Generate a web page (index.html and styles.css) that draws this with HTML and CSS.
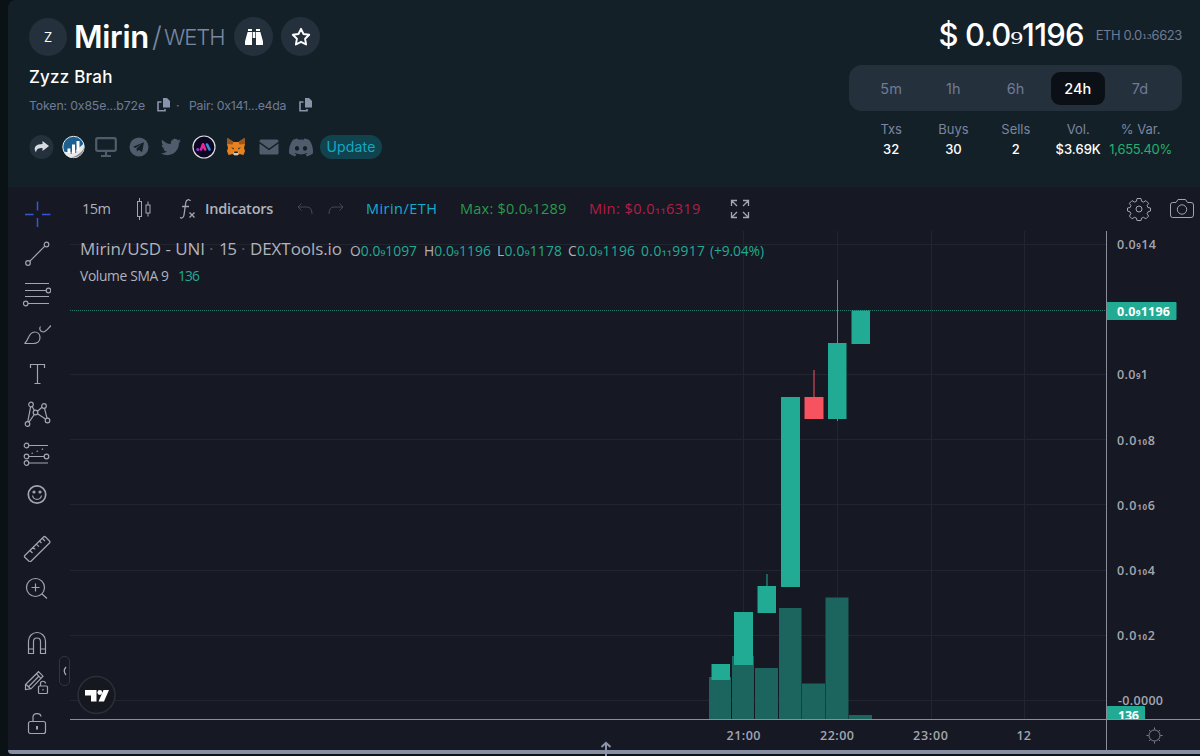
FILE: index.html
```html
<!DOCTYPE html>
<html lang="en">
<head>
    <meta charset="UTF-8">
    <meta name="viewport" content="width=device-width, initial-scale=1.0">
    <title>Mirin / WETH</title>
    <link rel="stylesheet" href="styles.css">
</head>
<body>
<div class="page">

    <header class="pair-header">
        <div class="pair-info">
            <div class="title-row">
                <span class="token-logo">Z</span>
                <h1 class="symbol">Mirin</h1>
                <span class="slash">/</span>
                <span class="quote">WETH</span>
                <button class="round-btn">
                    <svg width="20" height="18" viewBox="0 0 20 18" fill="#fff"><path d="M4 1h4v2H4zM12 1h4v2h-4zM3.6 4H8v13H1v-3.5zM12 4h4.4L19 13.5V17h-7zM8.7 4h2.6v6H8.7z"/></svg>
                </button>
                <button class="round-btn">
                    <svg width="20" height="20" viewBox="0 0 20 20" fill="none" stroke="#fff" stroke-width="1.9" stroke-linejoin="round"><path d="M10 1.8l2.5 5.2 5.7.8-4.1 4 1 5.7-5.1-2.7-5.1 2.7 1-5.7-4.1-4 5.7-.8z"/></svg>
                </button>
            </div>
            <h2 class="token-name">Zyzz Brah</h2>
            <div class="address-row">
                <span class="addr addr-token">Token: 0x85e...b72e</span>
                <svg class="copy" width="14" height="14" viewBox="0 0 14 14"><path d="M6 0h4l3 3v6.5H6z" fill="#8a93aa"/><path d="M4.5 4H1v8.8h7V11" fill="none" stroke="#8a93aa" stroke-width="1.6"/></svg>
                <span class="dot">·</span>
                <span class="addr addr-pair">Pair: 0x141...e4da</span>
                <svg class="copy" width="14" height="14" viewBox="0 0 14 14"><path d="M6 0h4l3 3v6.5H6z" fill="#8a93aa"/><path d="M4.5 4H1v8.8h7V11" fill="none" stroke="#8a93aa" stroke-width="1.6"/></svg>
            </div>
            <div class="links-row">
                <svg width="25" height="24" viewBox="0 0 25 24"><circle cx="12.5" cy="12" r="12" fill="#24303b"/><path d="M13.5 6l6.5 5-6.5 5v-3c-4 0-6 .8-6.5 4.5C3.5 12 7.5 9 13.5 9z" fill="#d5dae3"/></svg>
                <svg width="23" height="24" viewBox="0 0 23 24"><circle cx="11.5" cy="12" r="10.7" fill="#1c5f91" stroke="#dfe6ec"/><path d="M2 16.5c7 2 14-1.5 20-8.5 1 8-4 15-10.5 15C7 23 3 20.5 2 16.5z" fill="#e9e9e7"/><path d="M9 22.800c5-1.500 10-4.500 13-9.500-.5 5.500-5.500 9.800-13 9.500z" fill="#918c88"/><path d="M5.500 13.500h3V18h-3zM10 9.500h3V18h-3zM14.500 6h3v10h-3z" fill="#fff"/><path d="M9.200 13.500V19M13.700 10v8" stroke="#1c5f91" stroke-width=".9"/></svg>
                <svg width="22" height="22" viewBox="0 0 22 22" fill="none" stroke="#505b6b" stroke-width="2.2"><rect x="1.2" y="2.2" width="19.6" height="12.6" rx="1.5"/><path d="M11 15v4M6 20h10"/></svg>
                <svg width="20" height="20" viewBox="0 0 20 20"><circle cx="10" cy="10" r="9.5" fill="#505b6b"/><path d="M4 9.8l11-4.6-1.900 10-3.300-2.400-1.900 1.800-.4-3.200 5-4.300-6.200 3.800z" fill="#142027"/></svg>
                <svg width="20" height="20" viewBox="0 0 24 24" fill="#505b6b"><path d="M23.950 4.600a10 10 0 0 1-2.800.8 4.960 4.960 0 0 0 2.160-2.720c-.95.550-2 .950-3.130 1.180a4.920 4.920 0 0 0-8.380 4.480C7.700 8.100 4.070 6.130 1.640 3.160a4.920 4.920 0 0 0 1.520 6.570 4.900 4.900 0 0 1-2.230-.6v.06a4.920 4.920 0 0 0 3.950 4.830 5 5 0 0 1-2.210.080 4.940 4.940 0 0 0 4.600 3.420A9.870 9.870 0 0 1 0 19.540a14 14 0 0 0 7.550 2.210c9.050 0 14-7.500 14-13.980 0-.210 0-.420-.020-.630a9.940 9.940 0 0 0 2.420-2.540z"/></svg>
                <svg width="24" height="24" viewBox="0 0 24 24" fill="none" stroke-linecap="round"><circle cx="12" cy="12" r="11" fill="#0b0720" stroke="#dcdde2" stroke-width="1.2"/><circle cx="5.8" cy="14.5" r="1.5" fill="#b02be0"/><path d="M9 14.500l2-5" stroke="#d822c4" stroke-width="2.6"/><path d="M11 9.500l2.200 5" stroke="#ee2a86" stroke-width="2.6"/><path d="M15 9.500l2.500 5" stroke="#2c8fe8" stroke-width="2.6"/></svg>
                <svg width="20" height="20" viewBox="0 0 20 20"><path d="M1.500 1l6 4h5l6-4 .5 6-1 4 1 3-1.500 4-4-1-2 1.500h-3L6.500 17l-4 1L1 14l1-3-1-4z" fill="#e8821e"/><path d="M1.500 1l6 4-1 2.500L1 7zM18.500 1l-6 4 1 2.500L19 7z" fill="#9a5522"/><path d="M5 10.500l3 .5-.5 1.500zM15 10.500l-3 .5.5 1.500z" fill="#29303c"/><path d="M7.500 15h5l-.5 3H8z" fill="#d9c8b8"/><path d="M8.500 14.500h3l.5 1.500H8z" fill="#222"/></svg>
                <svg width="20" height="20" viewBox="0 0 20 20" fill="#505b6b"><path d="M2 2.500h16q1.500 0 1.500 1.500v.8L10 11.500.5 4.800V4Q.5 2.500 2 2.500z"/><path d="M.5 6.500L10 13.300l9.500-6.800V16q0 1.500-1.500 1.500H2Q.5 17.500.5 16z"/></svg>
                <svg width="24" height="20" viewBox="0 0 24 20" fill="#505b6b"><path fill-rule="evenodd" d="M20.300 3A19.800 19.800 0 0 0 15.400 1.500l-.7 1.300a18 18 0 0 0-5.400 0L8.600 1.500A19.800 19.800 0 0 0 3.700 3C.6 7.600-.3 12 .1 16.400a20 20 0 0 0 6 3l1.300-2.100-1.900-.9.5-.4a14.200 14.200 0 0 0 12 0l.5.4-1.900.9 1.300 2.100a20 20 0 0 0 6-3C24.400 11.300 23.100 6.900 20.300 3zM8 13.700c-1.200 0-2.100-1.100-2.100-2.400S6.800 8.900 8 8.900s2.200 1.100 2.100 2.400c0 1.300-.9 2.400-2.100 2.400zm8 0c-1.200 0-2.100-1.100-2.100-2.400s.9-2.400 2.100-2.400 2.200 1.100 2.100 2.400c0 1.300-.9 2.400-2.100 2.400z"/></svg>
                <button class="update-btn">Update</button>
            </div>
        </div>

        <div class="price-info">
            <div class="price-row">
                <span class="price">$ 0.0<span class="serif-sub">₉</span>1196</span>
                <span class="price-eth">ETH 0.0<span class="serif-sub">₁₃</span>6623</span>
            </div>
            <div class="range-tabs">
                <button class="tab">5m</button>
                <button class="tab">1h</button>
                <button class="tab">6h</button>
                <button class="tab active">24h</button>
                <button class="tab">7d</button>
            </div>
            <div class="stats">
                <div class="stat"><span>Txs</span><b>32</b></div>
                <div class="stat"><span>Buys</span><b>30</b></div>
                <div class="stat"><span>Sells</span><b>2</b></div>
                <div class="stat"><span>Vol.</span><b>$3.69K</b></div>
                <div class="stat"><span>% Var.</span><b class="up">1,655.40%</b></div>
            </div>
        </div>
    </header>

    <main class="chart-panel">
        <aside class="draw-tools">
            <svg class="tool cross" viewBox="0 0 28 28"><path d="M14.5 1.5v9M14.5 18v9M2 14.5h8.5M19 14.5h8.5"/></svg>
            <svg class="tool" viewBox="0 0 28 28"><circle cx="5" cy="23" r="2.3"/><circle cx="23.5" cy="4.5" r="2.3"/><path d="M6.7 21.3L21.8 6.2"/></svg>
            <svg class="tool" viewBox="0 0 28 28"><path d="M2 3.5h24M2 10.5h21M2 16.5h24M5 23.5h21"/><circle cx="25.5" cy="10.5" r="2.3"/><circle cx="2.7" cy="23.5" r="2.3"/></svg>
            <svg class="tool" viewBox="0 0 28 28"><path d="M1.5 23.5c4-2 3.500-11.500 10-11.500 3.500 0 5.500 2.500 5.500 5.500 0 4-3 6-6.500 6zM17.500 6.500c-1.500 2-.5 5.500 3 5.500 2 0 3-1.500 7.500-6.500"/></svg>
            <svg class="tool" viewBox="0 0 28 28"><path d="M7.5 8V4.500h14V8M14.500 4.500v19M11.500 23.500h6"/></svg>
            <svg class="tool" viewBox="0 0 28 28"><circle cx="4.5" cy="24" r="2.3"/><circle cx="8" cy="4.5" r="2.3"/><circle cx="12.5" cy="12.5" r="2.3"/><circle cx="21" cy="6" r="2.3"/><circle cx="24.5" cy="20.5" r="2.3"/><path d="M4.800 21.700L7.600 6.800M9.100 6.500l2.300 4M6 22.200l5.300-7.700M14.500 11.200L19 7.200M14.500 13.800l8 5.300M21.500 8.300l2.500 9.900"/></svg>
            <svg class="tool" viewBox="0 0 28 28"><circle cx="3.5" cy="5.5" r="2.3"/><circle cx="3.5" cy="16.5" r="2.3"/><circle cx="23.5" cy="16.5" r="2.3"/><circle cx="3.5" cy="23" r="2.3"/><path d="M6 5.500h19M6 16.500h15M6 23h19"/><path d="M8.500 13.500l14-5.500" stroke-dasharray="1.500 4"/></svg>
            <svg class="tool" viewBox="0 0 28 28"><circle cx="14" cy="14.5" r="8.7" stroke-width="1.7"/><path d="M9.500 15.500c1 5.200 8 5.200 9 0"/><circle class="solid" cx="11" cy="12" r="1"/><circle class="solid" cx="17" cy="12" r="1"/></svg>
            <svg class="tool gap" viewBox="0 0 28 28"><path d="M1.800 21.500L20.500 3q1-1 2 0l4 4q1 1 0 2L8 27.300q-1 1-2 0l-4.200-4q-.8-.9 0-1.800zM7 16.500l2.500 2.500M10.200 13.300l2 2M13.400 10.200l2.500 2.500M16.500 7l2 2M19.500 4.500L22 7"/></svg>
            <svg class="tool" viewBox="0 0 28 28"><circle cx="12.5" cy="13.5" r="9"/><path d="M12.500 9.500v8M8.500 13.500h8M19 20l5 4.500"/></svg>
            <svg class="tool gap wide" viewBox="0 0 28 28"><path d="M5.500 24.500V12a8.500 8.500 0 0 1 17 0v12.500h-5V12.500a3.500 3.500 0 0 0-7 0v12zM5.500 20h5M17.500 20h5"/></svg>
            <svg class="tool" viewBox="0 0 28 28"><path d="M2.500 20.500V15.500L15.500 2.700l4.500 4.500L8 19.800zM3 15.500l5 4.500M13.500 4.800l4.500 4.500M5.800 17.500L16 7"/><rect x="15.5" y="17" width="9" height="7.5" rx="1"/><path d="M17.500 17v-2.500c0-3 4.800-3 5 0M20 20v1.500"/></svg>
            <svg class="tool" viewBox="0 0 28 28"><rect x="5.5" y="12.5" width="17" height="12" rx="2"/><path d="M10 12.500V8.300c0-4.700 7.500-4.700 8-.8"/><path d="M14 17v3.500" stroke-width="2"/></svg>
            <button class="collapse"><svg width="5" height="10" viewBox="0 0 5 10"><path d="M4 1Q.5 5 4 9" fill="none" stroke="#a9acb6" stroke-width="1.2"/></svg></button>
        </aside>

        <section class="chart">
            <nav class="chart-toolbar">
                <span class="t-interval">15m</span>
                <svg class="tb-icon t-candles" width="18" height="24" viewBox="0 0 18 24"><rect x="2.5" y="4.5" width="4" height="15"/><path d="M4.500 1v3.500M4.500 19.500V23M13 4.500V8M13 16v3.500"/><rect x="11" y="8" width="4" height="8"/></svg>
                <svg class="tb-icon t-fx" width="18" height="22" viewBox="0 0 18 22"><path d="M11.500 3C10 .8 7.300 1.500 6.800 4.500L5 17c-.5 3-2.500 3.500-4 2.500M3 8.500h7M10.500 14.500l5 5M15.500 14.500l-5 5" stroke-width="1.3"/></svg>
                <span class="t-indicators">Indicators</span>
                <svg class="tb-icon dim t-undo" width="16" height="12" viewBox="0 0 16 12"><path d="M4.500.5L1 4l3.500 3.500M1 4h9q5 0 5 7"/></svg>
                <svg class="tb-icon dim t-redo" width="16" height="12" viewBox="0 0 16 12"><path d="M11.500.5L15 4l-3.500 3.500M15 4H6Q1 4 1 11"/></svg>
                <span class="t-pair">Mirin/ETH</span>
                <span class="t-max">Max: $0.0<span class="sub">₉</span>1289</span>
                <span class="t-min">Min: $0.0<span class="sub">₁₁</span>6319</span>
                <svg class="tb-icon t-full" width="20" height="20" viewBox="0 0 20 20"><path d="M1.500 7V1.500H7M1.500 1.500l5.500 5.500M13 1.500h5.500V7M18.500 1.500L13 7M1.500 13v5.500H7M1.500 18.500L7 13M13 18.500h5.500V13M18.500 18.500L13 13" stroke-width="1.3"/></svg>
                <svg class="tb-icon t-gear" width="24" height="24" viewBox="0 0 24 24"><circle cx="12" cy="12" r="3"/><path d="M10 1.500h4l.6 2.800 1.900.8 2.400-1.500 2.700 2.700-1.500 2.400.8 1.800 2.600.5v3l-2.600.9-.8 1.800 1.500 2.400-2.700 2.700-2.400-1.500-1.900.8-.6 2.400h-4l-.6-2.400-1.900-.8-2.400 1.500-2.700-2.700 1.500-2.400-.8-1.800-2.600-.9v-3l2.600-.5.8-1.800-1.500-2.400 2.700-2.700 2.400 1.500 1.900-.8z" stroke-linejoin="round"/></svg>
                <svg class="tb-icon t-camera" width="26" height="22" viewBox="0 0 26 22"><path d="M3.500 4.500H7L9 1.500h7.500l2 3H22q2.500 0 2.500 2.500v10q0 2.500-2.500 2.500H3.500Q1.500 19.500 1.500 17V7q0-2.500 2-2.500z"/><circle cx="13" cy="11.5" r="4.7"/></svg>
            </nav>

            <svg class="plot" width="1130" height="519" viewBox="70 231 1130 519">
                <g class="grid">
                    <path d="M70 244.500h1036M70 374.500h1036M70 439.500h1036M70 504.500h1036M70 570.500h1036M70 635.500h1036M70 700.500h1036"/>
                    <path d="M743.500 231v488M837.500 231v488M931.500 231v488M1024.500 231v488"/>
                </g>
                <path class="last-price" d="M70 310.500h1036"/>

                <!-- volume -->
                <g class="volume">
                    <rect x="709" y="677" width="22" height="42"/>
                    <rect x="732" y="656" width="22" height="63"/>
                    <rect x="755" y="668" width="23" height="51"/>
                    <rect x="779" y="608" width="22.5" height="111"/>
                    <rect x="802" y="683.5" width="23" height="35.5"/>
                    <rect x="825.5" y="597.5" width="23" height="121.5"/>
                    <rect x="849" y="715" width="23" height="4"/>
                </g>

                <!-- candles -->
                <g class="candles">
                    <rect x="711.5" y="664" width="18.5" height="16"/>
                    <rect x="734" y="612" width="19" height="53"/>
                    <rect x="757.5" y="586" width="18.5" height="27"/>
                    <rect x="766.5" y="574" width="1" height="12"/>
                    <rect x="781" y="397" width="19" height="190"/>
                    <rect class="down" x="804.5" y="397" width="19" height="22"/>
                    <rect class="down" x="813.5" y="370" width="1" height="27"/>
                    <rect x="828" y="343" width="18.5" height="76"/>
                    <rect x="837" y="280" width="1" height="141"/>
                    <rect x="851.5" y="310.5" width="18.5" height="33.5"/>
                </g>

                <g class="legend">
                    <text class="big" x="80" y="255" textLength="125">Mirin/USD - UNI</text>
                    <text class="big faint" x="209" y="255">·</text>
                    <text class="big" x="219" y="255" textLength="18">15</text>
                    <text class="big faint" x="241" y="255">·</text>
                    <text class="big" x="250" y="255" textLength="92">DEXTools.io</text>
                    <text x="350" y="256" textLength="67">O<tspan class="green">0.0<tspan class="sub">₉</tspan>1097</tspan></text>
                    <text x="424" y="256" textLength="67">H<tspan class="green">0.0<tspan class="sub">₉</tspan>1196</tspan></text>
                    <text x="497" y="256" textLength="65">L<tspan class="green">0.0<tspan class="sub">₉</tspan>1178</tspan></text>
                    <text x="568" y="256" textLength="67">C<tspan class="green">0.0<tspan class="sub">₉</tspan>1196</tspan></text>
                    <text class="green" x="641" y="256" textLength="64">0.0<tspan class="sub">₁₁</tspan>9917</text>
                    <text class="green" x="710" y="256" textLength="54">(+9.04%)</text>
                    <text x="80" y="281" textLength="89">Volume SMA 9</text>
                    <text class="green" x="178" y="281" textLength="22">136</text>
                </g>

                <g class="axis-labels">
                    <text x="1117" y="249" textLength="39">0.0<tspan class="sub">₉</tspan>14</text>
                    <text x="1117" y="379" textLength="31">0.0<tspan class="sub">₉</tspan>1</text>
                    <text x="1117" y="444.5" textLength="38">0.0<tspan class="sub">₁₀</tspan>8</text>
                    <text x="1117" y="509.5" textLength="38">0.0<tspan class="sub">₁₀</tspan>6</text>
                    <text x="1117" y="575" textLength="38">0.0<tspan class="sub">₁₀</tspan>4</text>
                    <text x="1117" y="640" textLength="38">0.0<tspan class="sub">₁₀</tspan>2</text>
                    <text x="1118" y="705" textLength="45">-0.0000</text>
                    <text x="726.5" y="740" textLength="34">21:00</text>
                    <text x="820" y="740" textLength="34">22:00</text>
                    <text x="913" y="740" textLength="35">23:00</text>
                    <text x="1016.5" y="740">12</text>
                </g>

                <rect class="tag" x="1106" y="302" width="70.5" height="18" rx="1"/>
                <text class="tag-text" x="1117" y="316" textLength="53">0.0<tspan class="sub">₉</tspan>1196</text>
                <clipPath id="above-axis"><rect x="1106" y="700" width="94" height="19"/></clipPath>
                <g clip-path="url(#above-axis)">
                    <rect class="tag" x="1106" y="706" width="39" height="18" rx="1"/>
                    <text class="tag-text" x="1118" y="720" textLength="21">136</text>
                </g>

                <path class="axis" d="M1106.500 231v519M70 719.500h1130"/>

                <circle class="tv-bg" cx="96.5" cy="695" r="18.5"/>
                <path class="tv" d="M85 690h11.500v11.500h-5.500v-6H85zM103.500 690h5.500l-5 11.500h-5.500z"/>
                <circle class="tv" cx="99.8" cy="692.5" r="2.4"/>

                <g class="sun">
                    <circle cx="1154.5" cy="735.5" r="5.5"/>
                    <path d="M1154.500 727.500v2M1154.500 741.500v2M1146.500 735.500h2M1160.500 735.500h2M1149 730l1.500 1.500M1158.500 739.500l1.500 1.500M1149 741l1.500-1.500M1158.500 731.500l1.500-1.500"/>
                </g>
            </svg>
        </section>
    </main>

    <div class="resize-bar">
        <svg class="resize-arrow" width="12" height="15" viewBox="0 0 12 15"><path d="M6 15V2M1.500 6L6 1.800 10.500 6" fill="none" stroke="#8b94a8" stroke-width="2"/></svg>
    </div>
</div>
</body>
</html>
```
FILE: styles.css
```css
* {
    box-sizing: border-box;
}

body {
    margin: 0;
    background: #0a1216;
    font-family: "Inter", "Open Sans", sans-serif;
    color: #fff;
    overflow: hidden;
}

button {
    border: none;
    padding: 0;
    font-family: inherit;
    color: inherit;
    cursor: pointer;
}

svg {
    display: block;
    flex: none;
}

.page {
    height: 756px;
    padding-left: 8px;
    display: flex;
    flex-direction: column;
}

/* Header */
.pair-header {
    height: 187px;
    padding: 0 18px 0 21px;
    background: #142027;
    border-top-left-radius: 8px;
    display: flex;
    justify-content: space-between;
}

.title-row {
    height: 39px;
    margin-top: 17px;
    display: flex;
    align-items: center;
}

.token-logo {
    width: 38px;
    height: 38px;
    border-radius: 50%;
    background: #24303b;
    display: flex;
    align-items: center;
    justify-content: center;
    font-size: 13px;
}

.symbol {
    margin: 0 0 0 7px;
    width: 78px;
    font-size: 31px;
    font-weight: 600;
    letter-spacing: -0.3px;
}

.slash {
    width: 12px;
    font-size: 28px;
    font-weight: 300;
    color: #7a87a3;
}

.quote {
    width: 70px;
    font-size: 22px;
    font-weight: 300;
    letter-spacing: -1px;
    color: #7a87a3;
}

.round-btn {
    width: 39px;
    height: 39px;
    margin-right: 8px;
    border-radius: 50%;
    background: #24303b;
    display: flex;
    align-items: center;
    justify-content: center;
}

.token-name {
    margin: 9px 0 0;
    font-size: 17px;
    line-height: 24px;
    font-weight: 500;
    letter-spacing: 0.2px;
}

.address-row {
    height: 20px;
    margin-top: 6px;
    display: flex;
    align-items: center;
    font-size: 12.3px;
    letter-spacing: -0.15px;
    color: #6f7b96;
}

.addr {
    white-space: nowrap;
}

.addr-token {
    width: 128px;
}

.addr-pair {
    width: 110px;
    letter-spacing: -0.25px;
}

.dot {
    width: 18px;
    padding-left: 5px;
}

.links-row {
    height: 24px;
    margin: 20px 0 0 -4px;
    display: grid;
    grid-template-columns: repeat(9, 32.5px) 62px;
    align-items: center;
    justify-items: center;
}

.update-btn {
    width: 62px;
    height: 24px;
    margin-left: 5px;
    padding-bottom: 2px;
    border-radius: 12px;
    background: #11434f;
    color: #12a9c5;
    font-size: 14px;
    letter-spacing: 0.2px;
}

.price-info {
    width: 333px;
}

.price-row {
    height: 48px;
    margin-top: 11px;
    display: flex;
    align-items: center;
    justify-content: flex-end;
    gap: 12px;
    white-space: nowrap;
}

.price {
    font-size: 31px;
    line-height: 40px;
    font-weight: 500;
    letter-spacing: -0.8px;
}

.price-eth {
    font-size: 13px;
    letter-spacing: -0.4px;
    color: #6f7b96;
}

.serif-sub {
    font-family: "DejaVu Serif", serif;
    line-height: 1;
    vertical-align: 0.08em;
}

.range-tabs {
    height: 46px;
    margin-top: 6px;
    padding: 0 11px;
    border-radius: 13px;
    background: #24303b;
    display: grid;
    grid-template-columns: repeat(5, 1fr);
    align-items: center;
    justify-items: center;
}

.tab {
    width: 54px;
    height: 33px;
    border-radius: 9px;
    background: transparent;
    color: #6f7b96;
    font-size: 14.5px;
}

.tab.active {
    background: #0b1016;
    color: #fff;
    font-weight: 500;
}

.stats {
    margin-top: 8px;
    padding: 0 10px 0 11px;
    display: grid;
    grid-template-columns: repeat(5, 1fr);
}

.stat {
    display: flex;
    flex-direction: column;
    align-items: center;
    font-size: 13px;
    line-height: 20px;
    color: #7a86a0;
}

.stat b {
    font-weight: 500;
    color: #fff;
}

.stat .up {
    font-weight: 400;
    letter-spacing: -0.3px;
    color: #23b26d;
}

/* Chart */
.chart-panel {
    height: 563px;
    background: #161823;
    display: flex;
    font-family: "Open Sans", "Noto Sans", sans-serif;
}

.draw-tools {
    position: relative;
    width: 62px;
    padding: 7px 5px 0 0;
    display: flex;
    flex-direction: column;
    align-items: center;
}

.tool {
    width: 28px;
    height: 28px;
    margin: 6px 0;
    fill: none;
    stroke: #a3a6b0;
    stroke-width: 1.2;
}

.tool.gap {
    margin-top: 20px;
}

.tool.wide {
    margin-top: 21px;
}

.tool.cross {
    stroke: #3557d6;
    stroke-width: 1.5;
}

.tool .solid {
    fill: #a3a6b0;
}

.collapse {
    position: absolute;
    left: 51px;
    top: 469px;
    width: 11px;
    height: 30px;
    border: 1px solid #2c3840;
    border-radius: 5px;
    background: #161823;
    display: flex;
    align-items: center;
    justify-content: center;
}

.chart {
    width: 1130px;
}

.chart-toolbar {
    height: 44px;
    padding-left: 12px;
    display: flex;
    align-items: center;
    font-size: 14.5px;
    line-height: 20px;
    font-weight: 500;
    color: #b0b3bc;
    white-space: nowrap;
}

.chart-toolbar > span {
    padding-bottom: 1px;
}

.sub {
    line-height: 1;
    vertical-align: 2px;
    baseline-shift: 2px;
}

.tb-icon {
    fill: none;
    stroke: #a3a6b0;
}

.tb-icon.dim {
    stroke: #454954;
}

.t-interval {
    width: 53px;
    letter-spacing: -0.6px;
}

.t-candles {
    margin-right: 26px;
}

.t-fx {
    margin-right: 8px;
}

.t-indicators {
    width: 92px;
    font-weight: 600;
    letter-spacing: -0.2px;
}

.t-undo {
    margin-right: 15px;
}

.t-redo {
    margin-right: 22px;
}

.t-pair {
    width: 94px;
    letter-spacing: 0.45px;
    color: #12aed0;
}

.t-max {
    width: 129px;
    letter-spacing: 0.25px;
    color: #2a9a4c;
}

.t-min {
    width: 141px;
    letter-spacing: 0.45px;
    color: #b51d48;
}

.t-full {
    margin-right: auto;
}

.t-gear {
    margin-right: 18px;
}

.t-camera {
    margin-right: 5px;
}

.grid path {
    fill: none;
    stroke: #22252f;
}

.last-price {
    stroke: #2c7a6f;
    stroke-dasharray: 1 1;
}

.volume {
    fill: #1c655e;
}

.candles {
    fill: #22ab94;
}

.candles .down {
    fill: #f7525f;
}

.legend text {
    font-size: 13.8px;
    font-weight: 500;
    fill: #b0b3bc;
}

.legend .big {
    font-size: 17px;
}

.legend .faint {
    fill: #5b5e68;
}

.legend .green {
    fill: #22ab94;
}

.axis-labels text {
    font-size: 12.5px;
    font-weight: 600;
    fill: #a3a6b0;
}

.tag {
    fill: #22ab94;
}

.tag-text {
    font-size: 12.5px;
    font-weight: 700;
    fill: #fff;
}

.axis {
    fill: none;
    stroke: #8b8e98;
}

.tv-bg {
    fill: #161820;
    stroke: #2c2f3a;
    stroke-width: 1.5;
}

.tv {
    fill: #fff;
}

.sun {
    fill: none;
    stroke: #80838d;
}

.resize-bar {
    position: relative;
    height: 4px;
    background: #858ea2;
    border-bottom-left-radius: 4px;
}

.resize-arrow {
    position: absolute;
    left: 592px;
    top: -9px;
}
```
